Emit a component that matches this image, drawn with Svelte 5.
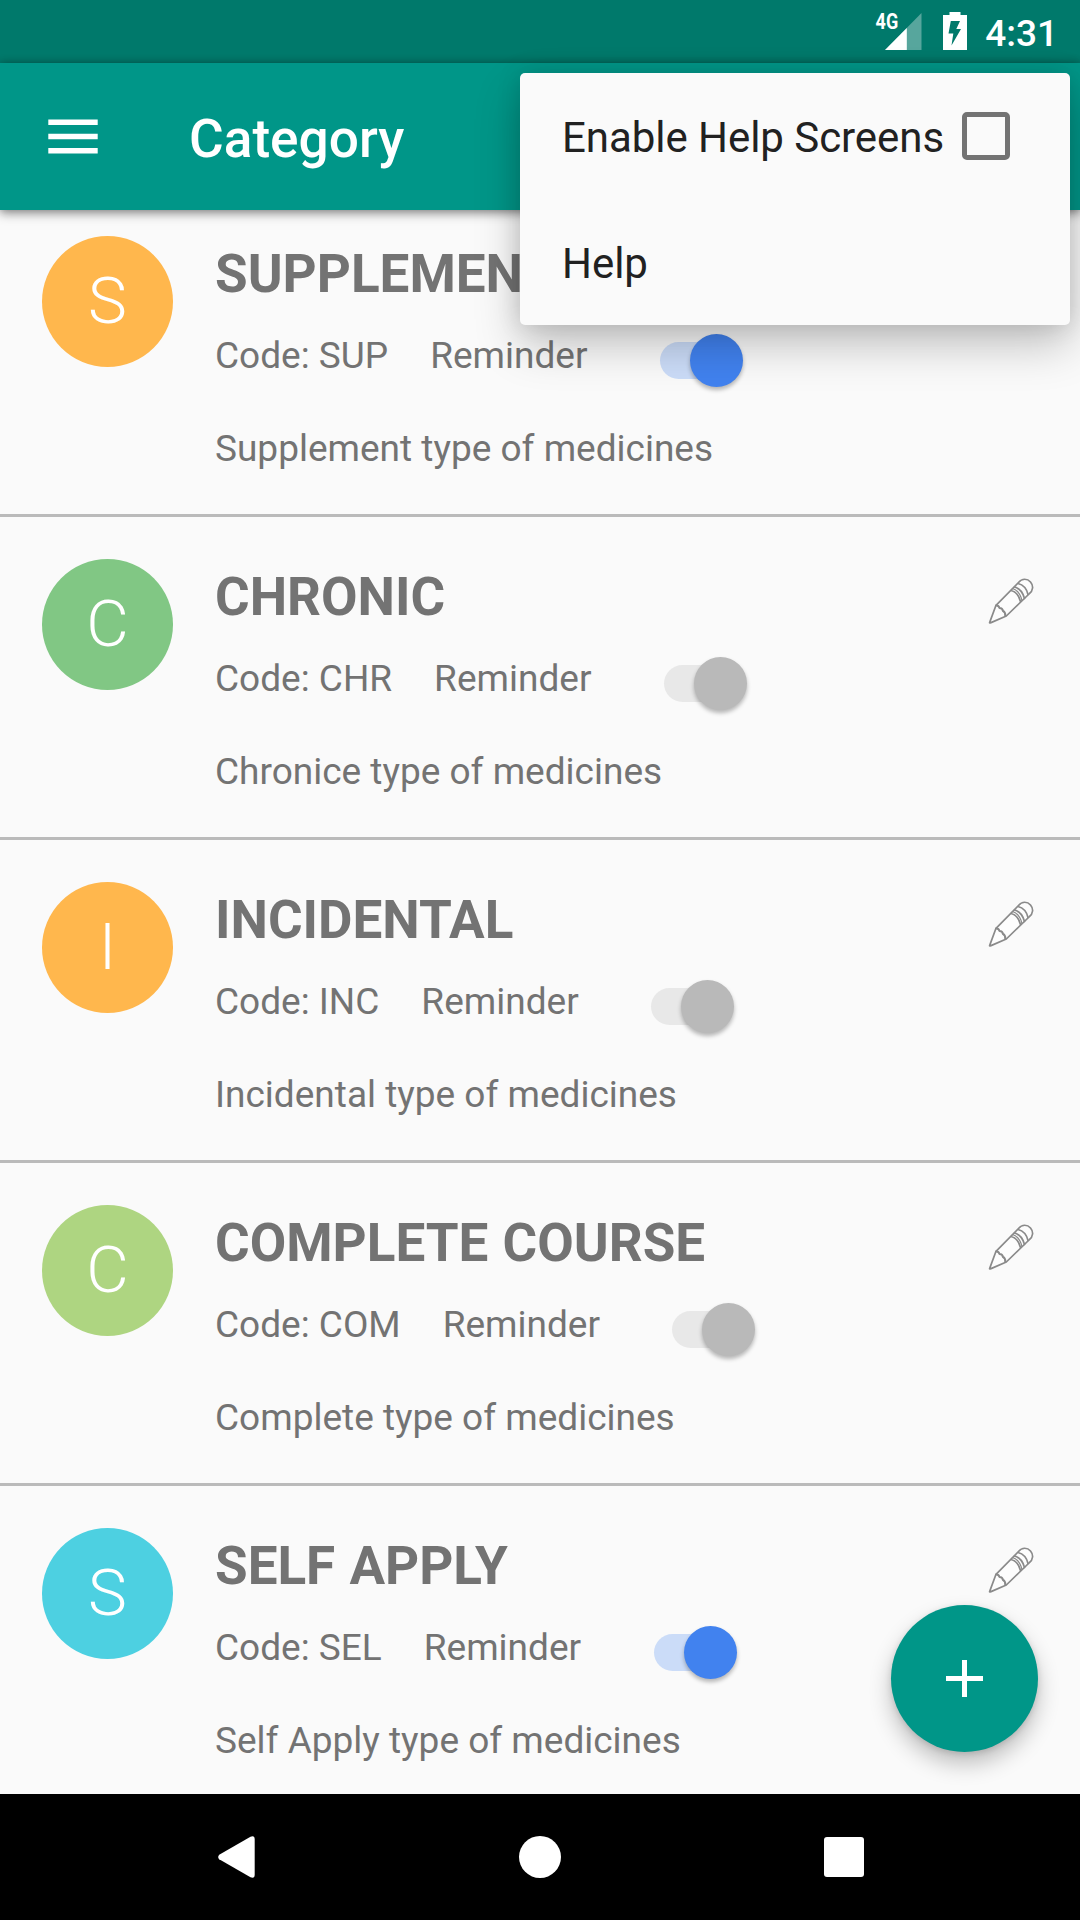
<script>
  const categories = [
    { name: 'SUPPLEMENT', code: 'SUP', note: 'Supplement type of medicines', tone: 'orange', on: true },
    { name: 'CHRONIC', code: 'CHR', note: 'Chronice type of medicines', tone: 'green', on: false },
    { name: 'INCIDENTAL', code: 'INC', note: 'Incidental type of medicines', tone: 'orange', on: false },
    { name: 'COMPLETE COURSE', code: 'COM', note: 'Complete type of medicines', tone: 'lime', on: false },
    { name: 'SELF APPLY', code: 'SEL', note: 'Self Apply type of medicines', tone: 'cyan', on: true }
  ];
</script>

<div class="screen">
  <header class="status">
    <svg class="signal" width="54" height="48" viewBox="-6 -8 54 48">
      <path d="M10 38 L46.5 38 L46.5 1 Z" fill="#fff" opacity=".34" />
      <path d="M10 38 L31.8 38 L31.8 16 Z" fill="#fff" />
      <text x="0.6" y="17" textLength="22.6" lengthAdjust="spacingAndGlyphs">4G</text>
    </svg>
    <svg class="battery" width="24" height="38" viewBox="0 0 24 38">
      <path d="M6.500 0H17.500V3H24V38H0V3H6.500Z" fill="#fff" />
      <path d="M7.800 9H17L13.300 17H18L8.500 33.500L10.300 21.500H5.500Z" fill="#00796b" />
    </svg>
    <span class="time">4:31</span>
  </header>

  <div class="appbar">
    <svg class="burger" width="50" height="35" viewBox="0 0 50 35">
      <path d="M.3 .6H49.700V5.900H.3ZM.3 14.800H49.700V20.200H.3ZM.3 29.100H49.700V34.500H.3Z" fill="#fff" />
    </svg>
    <h1>Category</h1>
  </div>

  <main>
    <ul>
      {#each categories as c}
        <li>
          <div class="avatar {c.tone}">{c.name[0]}</div>
          <div class="body">
            <h2>{c.name}</h2>
            <div class="meta">
              <span>Code: {c.code}</span>
              <span class="label">Reminder</span>
              <i class="switch" class:on={c.on}><b></b></i>
            </div>
            <p>{c.note}</p>
          </div>
          <svg class="pencil" width="46" height="46" viewBox="0 0 46 46">
            <g fill="none" stroke="#8a8a8a" stroke-width="1.7" stroke-linejoin="round" stroke-linecap="round">
              <path d="M1.600 44.600L8 27.300L30.500 4.500C34 0 39.500 .5 42.500 4C45.500 7.500 45.500 12.500 41 16L18.300 38L3 44.600Q1.500 45 1.600 44.600Z" fill="#fdfdfd" />
              <path d="M8 27.500Q10.500 27 11.500 30Q14.500 30 15 33Q17.500 34 17.300 38" stroke-width="2" />
              <path d="M23 12.500Q30 14 32.500 23.500M26.500 9Q34 11 36.500 20.500M30 5.500Q38 7.500 40 16.500" />
              <path d="M24.500 10.500Q31.500 12.500 34 22.500" stroke-width="1.2" />
            </g>
          </svg>
        </li>
      {/each}
    </ul>
  </main>

  <nav>
    <svg width="37" height="42" viewBox="0 0 37 42">
      <path d="M1.200 18.700L32.500 .7Q36.700-1 36.700 3.500V38.500Q36.700 43 32.500 41.300L1.200 23.300Q-.8 21 1.200 18.700Z" fill="#fff" />
    </svg>
    <svg width="42" height="42" viewBox="0 0 42 42"><circle cx="21" cy="21" r="21" fill="#fff" /></svg>
    <svg width="40" height="40" viewBox="0 0 40 40"><rect width="40" height="40" rx="3" fill="#fff" /></svg>
  </nav>

  <button class="fab" aria-label="Add category">
    <svg width="37" height="37" viewBox="0 0 37 37"><path d="M16 0H21V16H37V21H21V37H16V21H0V16H16Z" fill="#fff" /></svg>
  </button>

  <div class="menu">
    <div class="item"><span>Enable Help Screens</span><i class="check"></i></div>
    <div class="item"><span>Help</span></div>
  </div>
</div>

<style>
  .screen {
    position: relative;
    display: flex;
    flex-direction: column;
    width: 1080px;
    height: 1920px;
    overflow: hidden;
    background: #fafafa;
    color: #737373;
    font-family: Roboto, sans-serif;
  }
  .status {
    flex: none;
    box-sizing: border-box;
    display: flex;
    height: 63px;
    padding: 12px 22px 0 0;
    justify-content: flex-end;
    background: #00796b;
    color: #fff;
  }
  .signal { margin-top: -8px; }
  .signal text {
    fill: #fff;
    font: 700 21.5px Roboto, sans-serif;
  }
  .battery { margin-left: 20px; }
  .time {
    margin-left: 18px;
    font-size: 37px;
    font-weight: 500;
    line-height: 43px;
  }
  .appbar {
    position: relative;
    z-index: 1;
    flex: none;
    box-sizing: border-box;
    display: flex;
    align-items: center;
    height: 147px;
    padding-left: 48px;
    background: #009688;
    box-shadow: 0 4px 10px rgba(0, 0, 0, .34), 0 0 8px rgba(0, 0, 0, .25);
  }
  .burger { margin-bottom: 1px; }
  h1 {
    margin: 5px 0 0 91px;
    color: #fff;
    font-size: 53.2px;
    font-weight: 500;
    line-height: 70px;
  }
  main {
    flex: 1;
    min-height: 0;
    overflow: hidden;
  }
  ul {
    margin: -16px 0 0;
    padding: 0;
    list-style: none;
  }
  li {
    box-sizing: border-box;
    display: flex;
    height: 323px;
    padding: 42px 46px 0 42px;
    border-bottom: 3px solid #bababa;
  }
  .avatar {
    flex: none;
    width: 131px;
    height: 131px;
    border-radius: 50%;
    color: #fff;
    font-size: 65.5px;
    font-weight: 300;
    line-height: 129px;
    text-align: center;
  }
  .orange { background: #ffb74d; }
  .green { background: #81c784; }
  .lime { background: #aed581; }
  .cyan { background: #4dd0e1; }
  .body {
    flex: 1;
    margin-left: 42px;
    font-size: 37px;
  }
  h2 {
    margin: 0;
    font-size: 53px;
    font-weight: 700;
    line-height: 76px;
    word-spacing: 1px;
    white-space: nowrap;
  }
  .meta {
    display: flex;
    align-items: center;
    height: 87px;
    line-height: 87px;
  }
  .label { margin-left: 42px; }
  p {
    margin: 0;
    line-height: 100px;
  }
  .switch {
    display: flex;
    justify-content: flex-end;
    align-items: center;
    width: 78px;
    height: 37px;
    margin: 10px 0 0 72.5px;
    border-radius: 19px;
    background: #e8e8e8;
  }
  .switch b {
    width: 53px;
    height: 53px;
    margin-right: -5px;
    border-radius: 50%;
    background: #b9b9b9;
    box-shadow: 0 3px 4px rgba(0, 0, 0, .28);
  }
  .switch.on { background: #cbdcf8; }
  .switch.on b { background: #4182ef; }
  .pencil {
    flex: none;
    margin-top: 19px;
  }
  nav {
    position: relative;
    flex: none;
    box-sizing: border-box;
    display: flex;
    align-items: center;
    justify-content: space-between;
    height: 126px;
    padding: 0 216px 0 218px;
    background: #000;
  }
  .fab {
    position: absolute;
    right: 42px;
    bottom: 168px;
    display: grid;
    place-items: center;
    width: 147px;
    height: 147px;
    padding: 0;
    border: 0;
    border-radius: 50%;
    background: #009688;
    box-shadow: 0 12px 22px rgba(0, 0, 0, .24), 0 2px 6px rgba(0, 0, 0, .13);
  }
  .menu {
    position: absolute;
    z-index: 2;
    top: 73px;
    left: 520px;
    width: 550px;
    height: 252px;
    border-radius: 5px;
    background: #fafafa;
    box-shadow: 0 20px 46px rgba(0, 0, 0, .23), 0 0 24px rgba(0, 0, 0, .13);
    color: #212121;
  }
  .item {
    display: flex;
    align-items: center;
    height: 126px;
    padding-left: 42px;
    font-size: 42px;
    letter-spacing: -.05px;
    line-height: 60px;
  }
  .item span { padding-top: 4px; }
  .check {
    box-sizing: border-box;
    width: 48px;
    height: 48px;
    margin-left: 18px;
    border: 5px solid #737373;
    border-radius: 5px;
  }
</style>
